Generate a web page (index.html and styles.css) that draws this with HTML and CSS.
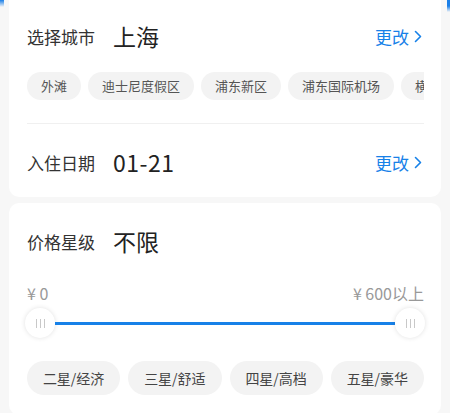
FILE: index.html
```html
<!DOCTYPE html>
<html lang="zh-CN">
<head>
<meta charset="utf-8">
<link rel="stylesheet" href="styles.css">
</head>
<body>
<div class="page">
  <section class="card card-top">
    <div class="row row-city">
      <span class="label">选择城市</span>
      <span class="value">上海</span>
      <a class="change">更改<svg class="chev" width="8" height="13" viewBox="0 0 8 13"><polyline points="1.5,1.5 6.5,6.5 1.5,11.5" fill="none" stroke="currentColor" stroke-width="1.6" stroke-linecap="round" stroke-linejoin="round"/></svg></a>
    </div>
    <div class="chips">
      <span class="chip">外滩</span>
      <span class="chip">迪士尼度假区</span>
      <span class="chip">浦东新区</span>
      <span class="chip">浦东国际机场</span>
      <span class="chip">横沙岛</span>
    </div>
    <div class="divider"></div>
    <div class="row row-date">
      <span class="label">入住日期</span>
      <span class="value date">01-21</span>
      <a class="change">更改<svg class="chev" width="8" height="13" viewBox="0 0 8 13"><polyline points="1.5,1.5 6.5,6.5 1.5,11.5" fill="none" stroke="currentColor" stroke-width="1.6" stroke-linecap="round" stroke-linejoin="round"/></svg></a>
    </div>
  </section>
  <section class="card card-price">
    <div class="row row-price">
      <span class="label">价格星级</span>
      <span class="value">不限</span>
    </div>
    <div class="range-labels">
      <span>¥ 0</span>
      <span>¥ 600以上</span>
    </div>
    <div class="slider">
      <span class="thumb"><i></i><i></i><i></i></span>
      <span class="track"></span>
      <span class="thumb"><i></i><i></i><i></i></span>
    </div>
    <div class="stars">
      <span class="star">二星/经济</span>
      <span class="star">三星/舒适</span>
      <span class="star">四星/高档</span>
      <span class="star">五星/豪华</span>
    </div>
  </section>
</div>
</body>
</html>
```

FILE: styles.css
```css
* { box-sizing: border-box; }
html, body { margin: 0; padding: 0; }
html { background: #f7f7f7; }
body {
  width: 450px;
  height: 413px;
  overflow: hidden;
  background:
    linear-gradient(to bottom, #1a7fe8 0px, #f7f7f7 7px) left top / 4px 10px no-repeat,
    linear-gradient(to bottom, #1a7fe8 0px, #1a7fe8 6px, #f7f7f7 12px) right top / 3px 14px no-repeat,
    #f7f7f7;
  font-family: "Noto Sans CJK SC", "Noto Sans", sans-serif;
  color: #333;
}
.page {
  padding: 0 9px;
  display: flex;
  flex-direction: column;
  gap: 6px;
}
.card {
  background: #fff;
  border-radius: 10px;
  padding: 0 17px 0 18px;
}
.card-top {
  border-radius: 0 0 10px 10px;
  padding-top: 8px;
}
.row {
  display: flex;
  align-items: center;
}
.row-city { height: 56px; }
.row-date { height: 73px; padding-top: 3px; }
.row-price { height: 40px; margin-top: 18px; }
.label {
  width: 86px;
  font-size: 17px;
  color: #333;
  line-height: 1;
}
.value {
  font-size: 23px;
  color: #222;
  line-height: 1;
}
.date { letter-spacing: 0.5px; }
.change {
  margin-left: auto;
  display: flex;
  align-items: center;
  gap: 5px;
  color: #1781e8;
  font-size: 17px;
  line-height: 1;
  margin-right: 2px;
}
.chev { display: block; }
.chips {
  margin-top: 8px;
  display: flex;
  gap: 7px;
  overflow: hidden;
  white-space: nowrap;
}
.chip {
  flex: none;
  height: 28px;
  line-height: 28px;
  padding: 0 14px;
  border-radius: 14px;
  background: #f3f3f3;
  font-size: 13px;
  color: #555;
}
.divider {
  margin-top: 23px;
  height: 1px;
  background: #f0f0f0;
}
.range-labels {
  margin-top: 22px;
  display: flex;
  justify-content: space-between;
  font-size: 16px;
  color: #999;
  line-height: 20px;
}
.slider {
  margin: 5px -1px 0 -2px;
  display: flex;
  align-items: center;
  height: 30px;
}
.thumb {
  flex: none;
  width: 30px;
  height: 30px;
  border-radius: 50%;
  background: #fff;
  box-shadow: 0 0 5px rgba(0, 0, 0, 0.12);
  display: flex;
  align-items: center;
  justify-content: center;
  gap: 3px;
}
.thumb i {
  display: block;
  width: 1px;
  height: 9px;
  background: #c8c8c8;
}
.track {
  flex: 1;
  height: 3px;
  background: #1781e8;
}
.stars {
  margin-top: 23px;
  display: grid;
  grid-template-columns: repeat(4, 1fr);
  gap: 8px;
  padding-bottom: 20px;
}
.star {
  height: 34px;
  line-height: 34px;
  border-radius: 17px;
  background: #f3f3f3;
  text-align: center;
  font-size: 14px;
  color: #444;
}
```
